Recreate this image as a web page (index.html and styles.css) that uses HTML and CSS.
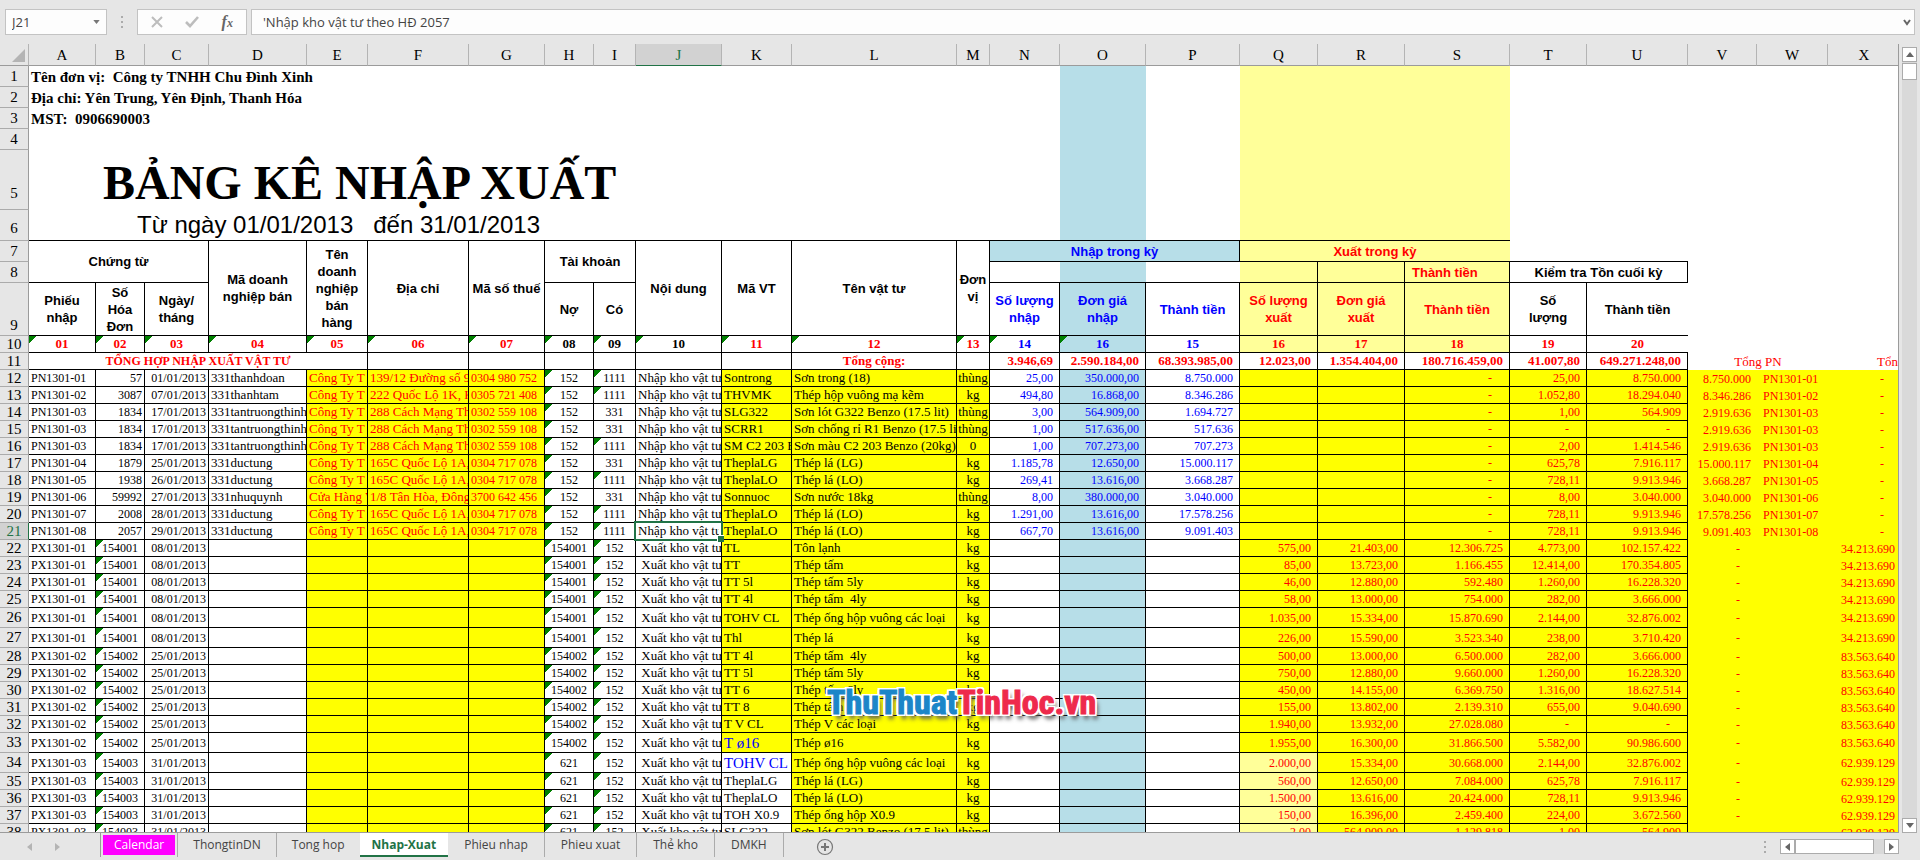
FILE: index.html
```html
<!DOCTYPE html>
<html lang="vi">
<head>
<meta charset="utf-8">
<title>Bảng kê nhập xuất</title>
<link rel="stylesheet" href="styles.css">
</head>
<body>
<div class="app">
  <header class="formula-bar">
    <label class="name-box">
      <input class="name-input" type="text" value="J21" aria-label="Name box">
      <svg class="caret" viewBox="0 0 8 5"><path d="M0 0h8L4 5z"/></svg>
    </label>
    <span class="grip"><i></i><i></i><i></i></span>
    <div class="fx-tools">
      <button type="button" aria-label="Cancel"><svg width="12" height="12" viewBox="0 0 12 12"><path d="M1 1l10 10M11 1L1 11" fill="none" stroke="#bdbdbd" stroke-width="2"/></svg></button>
      <button type="button" aria-label="Enter"><svg width="14" height="12" viewBox="0 0 14 12"><path d="M1 6l4 4 8-9" fill="none" stroke="#bdbdbd" stroke-width="2.6"/></svg></button>
      <button type="button" aria-label="Insert function" class="fx">f<small>x</small></button>
    </div>
    <label class="formula">
      <input class="formula-input" type="text" value="'Nhập kho vật tư theo HĐ 2057" aria-label="Formula bar">
      <svg class="chevron" width="8" height="7" viewBox="0 0 8 7"><path d="M1 1l3 4 3-4" fill="none" stroke="#666" stroke-width="2"/></svg>
    </label>
  </header>

  <main class="workspace">
    <div class="sheet">
      <table class="grid">
        <colgroup>
          <col class="c-head"><col class="c-a"><col class="c-b"><col class="c-c"><col class="c-d"><col class="c-e"><col class="c-f"><col class="c-g"><col class="c-h"><col class="c-i"><col class="c-j"><col class="c-k"><col class="c-l"><col class="c-m"><col class="c-n"><col class="c-o"><col class="c-p"><col class="c-q"><col class="c-r"><col class="c-s"><col class="c-t"><col class="c-u"><col class="c-v"><col class="c-w"><col class="c-x">
        </colgroup>
        <thead>
          <tr>
            <th class="corner"><svg width="13" height="13" viewBox="0 0 13 13"><path d="M13 0v13H0z" fill="#b4b4b4"/></svg></th>
            <th>A</th><th>B</th><th>C</th><th>D</th><th>E</th><th>F</th><th>G</th><th>H</th><th>I</th><th class="active">J</th><th>K</th><th>L</th><th>M</th><th>N</th><th>O</th><th>P</th><th>Q</th><th>R</th><th>S</th><th>T</th><th>U</th><th>V</th><th>W</th><th>X</th>
          </tr>
        </thead>
        <tbody>
          <tr class="r21"><th>1</th><td colspan="14" class="org">Tên đơn vị:  Công ty TNHH Chu Đình Xinh</td><td class="blue-bg"></td><td></td><td colspan="3" class="pale-bg"></td><td colspan="5"></td></tr>
          <tr class="r21"><th>2</th><td colspan="14" class="org">Địa chỉ: Yên Trung, Yên Định, Thanh Hóa</td><td class="blue-bg"></td><td></td><td colspan="3" class="pale-bg"></td><td colspan="5"></td></tr>
          <tr class="r21"><th>3</th><td colspan="14" class="org">MST:  0906690003</td><td class="blue-bg"></td><td></td><td colspan="3" class="pale-bg"></td><td colspan="5"></td></tr>
          <tr class="r21"><th>4</th><td colspan="14"></td><td class="blue-bg"></td><td></td><td colspan="3" class="pale-bg"></td><td colspan="5"></td></tr>
          <tr class="r60"><th>5</th><td colspan="14" class="title">BẢNG KÊ NHẬP XUẤT</td><td class="blue-bg"></td><td></td><td colspan="3" class="pale-bg"></td><td colspan="5"></td></tr>
          <tr class="r31"><th>6</th><td colspan="14" class="period bb">Từ ngày 01/01/2013   đến 31/01/2013</td><td class="blue-bg bb"></td><td class="bb"></td><td colspan="3" class="pale-bg bb"></td><td colspan="5"></td></tr>
          <tr class="r21 heads">
            <th>7</th>
            <td colspan="3" rowspan="2" class="box">Chứng từ</td>
            <td rowspan="3" class="box">Mã doanh nghiệp bán</td>
            <td rowspan="3" class="box">Tên doanh nghiệp bán hàng</td>
            <td rowspan="3" class="box">Địa chỉ</td>
            <td rowspan="3" class="box">Mã số thuế</td>
            <td colspan="2" rowspan="2" class="box">Tài khoản</td>
            <td rowspan="3" class="box">Nội dung</td>
            <td rowspan="3" class="box">Mã VT</td>
            <td rowspan="3" class="box">Tên vật tư</td>
            <td rowspan="3" class="box">Đơn vị</td>
            <td colspan="3" class="box blue-bg blue">Nhập trong kỳ</td>
            <td colspan="3" class="bb pale-bg red">Xuất trong kỳ</td>
            <td colspan="2" class="bb"></td>
            <td colspan="3"></td>
          </tr>
          <tr class="r21 heads">
            <th>8</th>
            <td class="bb"></td><td class="bb blue-bg"></td><td class="bb"></td>
            <td class="box pale-bg"></td><td class="box pale-bg"></td><td class="box pale-bg red start">Thành tiền</td>
            <td colspan="2" class="box">Kiểm tra Tồn cuối kỳ</td>
            <td colspan="3"></td>
          </tr>
          <tr class="r53 heads">
            <th>9</th>
            <td class="box">Phiếu nhập</td><td class="box">Số Hóa Đơn</td><td class="box">Ngày/<br>tháng</td>
            <td class="box">Nợ</td><td class="box">Có</td>
            <td class="box blue">Số lượng nhập</td><td class="box blue blue-bg">Đơn giá<br>nhập</td><td class="box blue">Thành tiền</td>
            <td class="box red pale-bg">Số lượng xuất</td><td class="box red pale-bg">Đơn giá<br>xuất</td><td class="box red pale-bg">Thành tiền</td>
            <td class="box">Số<br>lượng</td><td class="bb">Thành tiền</td>
            <td colspan="3"></td>
          </tr>
          <tr class="r17 codes">
            <th>10</th>
            <td class="box red flag">01</td><td class="box red flag">02</td><td class="box red flag">03</td><td class="box red flag">04</td><td class="box red flag">05</td><td class="box red flag">06</td><td class="box red flag">07</td>
            <td class="box flag">08</td><td class="box flag">09</td><td class="box flag">10</td>
            <td class="box red flag">11</td><td class="box red flag">12</td><td class="box red flag">13</td>
            <td class="box blue flag">14</td><td class="box blue blue-bg flag">16</td><td class="box blue">15</td>
            <td class="box red pale-bg">16</td><td class="box red pale-bg">17</td><td class="box red pale-bg">18</td>
            <td class="box red">19</td><td class="bb red">20</td>
            <td colspan="3"></td>
          </tr>
          <tr class="r17 totals">
            <th>11</th>
            <td colspan="5" class="box caption">TỔNG HỢP NHẬP XUẤT VẬT TƯ</td>
            <td class="box"></td><td class="box"></td><td class="box"></td><td class="box"></td><td class="box"></td><td class="box"></td>
            <td class="box label">Tổng cộng:</td><td class="box"></td>
            <td class="box">3.946,69</td><td class="box">2.590.184,00</td><td class="box">68.393.985,00</td>
            <td class="box">12.023,00</td><td class="box">1.354.404,00</td><td class="box">180.716.459,00</td>
            <td class="box">41.007,80</td><td class="box">649.271.248,00</td>
            <td colspan="2" class="side">Tổng PN</td><td class="side cut">Tổn</td>
          </tr>
        </tbody>
        <tbody id="records"></tbody>
      </table>
      <div class="watermark"><span>ThuThuat</span><em>TinHoc.vn</em></div>
    </div>
    <div class="vscroll">
      <button type="button" aria-label="Scroll up"><svg width="8" height="5" viewBox="0 0 8 5"><path d="M4 0l4 5H0z"/></svg></button>
      <div class="vtrack"><div class="vthumb"></div></div>
      <button type="button" aria-label="Scroll down"><svg width="8" height="5" viewBox="0 0 8 5"><path d="M0 0h8L4 5z"/></svg></button>
    </div>
  </main>

  <footer class="tab-bar">
    <div class="tab-nav">
      <button type="button" aria-label="Previous sheet"><svg width="5" height="8" viewBox="0 0 5 8"><path d="M5 0v8L0 4z"/></svg></button>
      <button type="button" aria-label="Next sheet"><svg width="5" height="8" viewBox="0 0 5 8"><path d="M0 0v8l5-4z"/></svg></button>
    </div>
    <nav class="tabs">
      <button type="button" class="tab calendar"><span>Calendar</span></button>
      <button type="button" class="tab">ThongtinDN</button>
      <button type="button" class="tab before-current">Tong hop</button>
      <button type="button" class="tab current">Nhap-Xuat</button>
      <button type="button" class="tab">Phieu nhap</button>
      <button type="button" class="tab">Phieu xuat</button>
      <button type="button" class="tab">Thẻ kho</button>
      <button type="button" class="tab">DMKH</button>
    </nav>
    <button type="button" class="add-tab" aria-label="New sheet"><svg width="18" height="18" viewBox="0 0 18 18"><circle cx="9" cy="9" r="7.5" fill="none" stroke="#777" stroke-width="1.2"/><path d="M9 5v8M5 9h8" stroke="#777" stroke-width="2"/></svg></button>
    <span class="grip bar-grip"><i></i><i></i><i></i></span>
    <div class="hscroll">
      <button type="button" aria-label="Scroll left"><svg width="5" height="8" viewBox="0 0 5 8"><path d="M5 0v8L0 4z"/></svg></button>
      <div class="htrack"><div class="hthumb"></div></div>
      <button type="button" aria-label="Scroll right"><svg width="5" height="8" viewBox="0 0 5 8"><path d="M0 0v8l5-4z"/></svg></button>
    </div>
  </footer>
</div>
<script src="app.js"></script>
</body>
</html>
```
FILE: styles.css
```css
* { box-sizing: border-box; }

body {
  margin: 0;
  background: #e6e6e6;
  color: #000;
  font-family: "Liberation Serif", "Times New Roman", serif;
}

button {
  margin: 0;
  padding: 0;
  border: 0;
  background: none;
  font: inherit;
  color: inherit;
}

.app {
  display: flex;
  flex-direction: column;
  height: 100vh;
  overflow: hidden;
}

/* Formula bar */
.formula-bar {
  display: flex;
  flex: none;
  height: 44px;
  padding: 9px 5px;
  font-family: "Open Sans", "Noto Sans", sans-serif;
  font-size: 13px;
  color: #444;
}

.name-box,
.fx-tools,
.formula {
  display: flex;
  align-items: center;
  background: #fdfdfd;
  border: 1px solid #c3c3c3;
}

.name-box { width: 102px; padding: 0 6px; }
.formula { flex: 1; margin-left: 4px; padding: 0 3px 0 11px; }

.name-input,
.formula-input {
  flex: 1;
  min-width: 0;
  padding: 0;
  border: 0;
  background: none;
  font: inherit;
  color: inherit;
}

.caret { width: 7px; height: 4px; fill: #777; }

.grip {
  display: flex;
  flex-direction: column;
  justify-content: center;
  align-items: center;
  gap: 3px;
  width: 30px;
}

.grip i { width: 2px; height: 2px; background: #ababab; }

.fx-tools { width: 110px; justify-content: space-around; padding: 0 2px; }
.fx-tools button { display: flex; align-items: center; }

.fx-tools .fx {
  align-items: baseline;
  font-family: "Liberation Serif", serif;
  font-style: italic;
  font-weight: bold;
  font-size: 16px;
  line-height: 16px;
  color: #666;
}

.fx small { font-size: 12px; }

/* Sheet */
.workspace {
  display: flex;
  flex: 1;
  min-height: 0;
  padding-right: 3px;
}

.sheet {
  position: relative;
  flex: 1;
  min-width: 0;
  overflow: hidden;
  background: #fff;
  border-right: 1px solid #9b9b9b;
  border-bottom: 1px solid #9b9b9b;
}

.grid {
  width: 1901px;
  table-layout: fixed;
  border-collapse: separate;
  border-spacing: 0;
}

.c-head { width: 29px; }
.c-a { width: 67px; }
.c-b { width: 49px; }
.c-c { width: 64px; }
.c-d { width: 98px; }
.c-e { width: 61px; }
.c-f { width: 101px; }
.c-g { width: 76px; }
.c-h { width: 49px; }
.c-i { width: 42px; }
.c-j { width: 86px; }
.c-k { width: 70px; }
.c-l { width: 165px; }
.c-m { width: 33px; }
.c-n { width: 70px; }
.c-o { width: 86px; }
.c-p { width: 94px; }
.c-q { width: 78px; }
.c-r { width: 87px; }
.c-s { width: 105px; }
.c-t { width: 77px; }
.c-u { width: 101px; }
.c-v { width: 69px; }
.c-w { width: 71px; }
.c-x { width: 73px; }

.grid th {
  padding: 0;
  background: #e6e6e6;
  border-right: 1px solid #9b9b9b;
  border-bottom: 1px solid #ababab;
  font-size: 15px;
  font-weight: normal;
  line-height: 16px;
  text-align: center;
  vertical-align: bottom;
}

.grid thead th {
  height: 22px;
  padding-bottom: 2px;
  border-right: 1px solid #b4b4b4;
  border-bottom: 1px solid #9b9b9b;
  background: #e6e6e6;
}

.grid thead .corner { padding: 0 3px 3px 0; text-align: right; line-height: 0; }

.grid thead .active,
.grid tbody .active {
  background: #d2d2d2;
  color: #217346;
}

.grid thead .active { border-bottom-color: #217346; }
.grid tbody .active { border-right-color: #217346; }

.grid td {
  padding: 0 2px;
  overflow: hidden;
  font-size: 13px;
  line-height: 16px;
  white-space: pre;
  vertical-align: middle;
}

.r17 > * { height: 17px; }
.r20 > * { height: 20px; }
.r21 > * { height: 21px; }
.r31 > * { height: 31px; }
.r53 > * { height: 53px; }
.r60 > * { height: 60px; }

.r20 th,
.r21 th { padding-bottom: 2px; }
.r31 th { padding-bottom: 4px; }
.r53 th { padding-bottom: 2px; }
.r60 th { padding-bottom: 8px; }

.grid .bb { border-bottom: 1px solid #000; }
.grid .box { border-right: 1px solid #000; border-bottom: 1px solid #000; }

.blue-bg { background: #b7dee8; }
.pale-bg { background: #ffff99; }
.yellow-bg { background: #ffff00; }
.blue { color: #0000ff; }
.red { color: #ff0000; }

.grid .org { font-size: 15px; font-weight: bold; line-height: 20px; }

.grid .title {
  padding-left: 74px;
  overflow: visible;
  font-size: 48px;
  font-weight: bold;
  line-height: 54px;
  vertical-align: bottom;
}

.grid .period {
  padding-left: 108px;
  font-family: "Liberation Sans", Arial, sans-serif;
  font-size: 24px;
  line-height: 30px;
}

.grid .heads td {
  padding: 0 2px;
  font-family: "Liberation Sans", Arial, sans-serif;
  font-weight: bold;
  line-height: 17px;
  text-align: center;
  white-space: normal;
}

.grid .heads .start { padding-left: 7px; text-align: left; }

.codes td { font-weight: bold; text-align: center; }

.grid .totals td {
  padding: 0 6px 0 0;
  color: #ff0000;
  font-weight: bold;
  text-align: right;
}

.grid .totals .caption { padding: 0; font-size: 12px; text-align: center; }
.grid .totals .label { padding: 0; text-align: center; }
.grid .totals .side { padding: 0; font-weight: normal; text-align: center; }
.grid .totals .cut { padding-left: 49px; text-align: left; }

/* Error marker in the top left corner of a cell */
.flag { background-image: linear-gradient(135deg, #008000 5px, transparent 5px); }

.grid .digits { font-size: 12px; }
.grid .right { text-align: right; }
.grid .center { padding: 0; text-align: center; }
.grid .amount { padding-right: 6px; font-size: 12px; text-align: right; }
.grid .dash { padding-right: 17px; }
.grid .ref { padding-left: 6px; }
.grid .large { font-size: 15px; color: #0000ff; }

.grid .selected { position: relative; overflow: visible; }
.selected span { display: block; overflow: hidden; }

.selected::before {
  content: "";
  position: absolute;
  inset: -2px -2px -2px -2px;
  border: 2px solid #217346;
}

.selected::after {
  content: "";
  position: absolute;
  right: -3px;
  bottom: -3px;
  width: 6px;
  height: 6px;
  background: #217346;
  border: solid #fff;
  border-width: 1px 0 0 1px;
}

.watermark {
  position: absolute;
  left: 827px;
  top: 638px;
  font-family: "Roboto Condensed", "Liberation Sans Narrow", "Liberation Sans", sans-serif;
  font-size: 34px;
  font-weight: bold;
  line-height: 40px;
  text-shadow: -2px 0 #fff, 2px 0 #fff, 0 -2px #fff, 0 2px #fff, -2px -2px #fff, 2px 2px #fff, 2px -2px #fff, -2px 2px #fff, 3px 5px 4px #555;
}

.watermark span { color: #1c86c8; -webkit-text-stroke: 1px #1c86c8; }
.watermark em { color: #ee2a4c; font-style: normal; -webkit-text-stroke: 1px #ee2a4c; }

/* Scroll bars */
.vscroll {
  display: flex;
  flex-direction: column;
  width: 15px;
  margin: 3px 0 0 3px;
}

.vscroll button,
.hscroll button {
  display: flex;
  flex: none;
  align-items: center;
  justify-content: center;
  width: 15px;
  height: 15px;
  background: #fff;
  border: 1px solid #ababab;
  fill: #666;
}

.vtrack { flex: 1; padding-top: 1px; background: #d9d9d9; }
.vthumb { height: 17px; background: #fff; border: 1px solid #ababab; }

.hscroll { display: flex; align-items: center; width: 119px; }
.htrack { flex: 1; height: 15px; background: #d9d9d9; }
.hthumb { width: 79px; height: 15px; background: #fff; border: 1px solid #ababab; }

/* Sheet tabs */
.tab-bar {
  display: flex;
  flex: none;
  height: 27px;
  padding-right: 21px;
  font-family: "Open Sans", "Noto Sans", sans-serif;
  font-size: 12px;
  color: #444;
}

.tab-nav {
  display: flex;
  align-items: center;
  gap: 23px;
  width: 100px;
  padding-left: 27px;
  fill: #b4b4b4;
}

.tab-nav button { display: flex; }

.tabs { display: flex; height: 24px; border-left: 1px solid #9b9b9b; }

.tab { padding: 0 15px 2px; border-right: 1px solid #ababab; }
.tab.calendar { padding: 2px; color: #fff; }
.calendar span { display: block; padding: 0 11px; background: #ff00ff; line-height: 20px; }
.tab.before-current { border-right: 0; }

.tab.current {
  padding: 0 12px;
  background: #fff;
  border-right: 0;
  border-bottom: 2px solid #217346;
  color: #217346;
  font-weight: bold;
}

.tab.current ~ .tab { padding: 0 16px 2px; }

.add-tab { display: flex; align-items: center; margin-left: 32px; }
.bar-grip { margin-left: auto; }
```
FILE: app.js
```js
// One line per record, columns A to X.
const records = `
PN1301-01|57|01/01/2013|331thanhdoan|Công Ty T|139/12 Đường số 9|0304 980 752|152|1111|Nhập kho vật tư|Sontrong|Sơn trong (18)|thùng|25,00|350.000,00|8.750.000|||-|25,00|8.750.000|8.750.000|PN1301-01|-
PN1301-02|3087|07/01/2013|331thanhtam|Công Ty T|222 Quốc Lộ 1K, K|0305 721 408|152|1111|Nhập kho vật tư|THVMK|Thép hộp vuông mạ kẽm|kg|494,80|16.868,00|8.346.286|||-|1.052,80|18.294.040|8.346.286|PN1301-02|-
PN1301-03|1834|17/01/2013|331tantruongthinh|Công Ty T|288 Cách Mạng Th|0302 559 108|152|331|Nhập kho vật tư|SLG322|Sơn lót G322 Benzo (17.5 lit)|thùng|3,00|564.909,00|1.694.727|||-|1,00|564.909|2.919.636|PN1301-03|-
PN1301-03|1834|17/01/2013|331tantruongthinh|Công Ty T|288 Cách Mạng Th|0302 559 108|152|331|Nhập kho vật tư|SCRR1|Sơn chống rỉ R1 Benzo (17.5 lit|thùng|1,00|517.636,00|517.636|||-|-|-|2.919.636|PN1301-03|-
PN1301-03|1834|17/01/2013|331tantruongthinh|Công Ty T|288 Cách Mạng Th|0302 559 108|152|1111|Nhập kho vật tư|SM C2 203 B|Sơn màu C2 203 Benzo (20kg)|0|1,00|707.273,00|707.273|||-|2,00|1.414.546|2.919.636|PN1301-03|-
PN1301-04|1879|25/01/2013|331ductung|Công Ty T|165C Quốc Lộ 1A,|0304 717 078|152|331|Nhập kho vật tư|TheplaLG|Thép lá (LG)|kg|1.185,78|12.650,00|15.000.117|||-|625,78|7.916.117|15.000.117|PN1301-04|-
PN1301-05|1938|26/01/2013|331ductung|Công Ty T|165C Quốc Lộ 1A,|0304 717 078|152|1111|Nhập kho vật tư|TheplaLO|Thép lá (LO)|kg|269,41|13.616,00|3.668.287|||-|728,11|9.913.946|3.668.287|PN1301-05|-
PN1301-06|59992|27/01/2013|331nhuquynh|Cửa Hàng V|1/8 Tân Hòa, Đông|3700 642 456|152|331|Nhập kho vật tư|Sonnuoc|Sơn nước 18kg|thùng|8,00|380.000,00|3.040.000|||-|8,00|3.040.000|3.040.000|PN1301-06|-
PN1301-07|2008|28/01/2013|331ductung|Công Ty T|165C Quốc Lộ 1A,|0304 717 078|152|1111|Nhập kho vật tư|TheplaLO|Thép lá (LO)|kg|1.291,00|13.616,00|17.578.256|||-|728,11|9.913.946|17.578.256|PN1301-07|-
PN1301-08|2057|29/01/2013|331ductung|Công Ty T|165C Quốc Lộ 1A,|0304 717 078|152|1111|Nhập kho vật tư|TheplaLO|Thép lá (LO)|kg|667,70|13.616,00|9.091.403|||-|728,11|9.913.946|9.091.403|PN1301-08|-
PX1301-01|154001|08/01/2013|||||154001|152| Xuất kho vật tư|TL|Tôn lạnh|kg||||575,00|21.403,00|12.306.725|4.773,00|102.157.422|-||34.213.690
PX1301-01|154001|08/01/2013|||||154001|152| Xuất kho vật tư|TT|Thép tấm|kg||||85,00|13.723,00|1.166.455|12.414,00|170.354.805|-||34.213.690
PX1301-01|154001|08/01/2013|||||154001|152| Xuất kho vật tư|TT 5l|Thép tấm 5ly|kg||||46,00|12.880,00|592.480|1.260,00|16.228.320|-||34.213.690
PX1301-01|154001|08/01/2013|||||154001|152| Xuất kho vật tư|TT 4l|Thép tấm  4ly|kg||||58,00|13.000,00|754.000|282,00|3.666.000|-||34.213.690
PX1301-01|154001|08/01/2013|||||154001|152| Xuất kho vật tư|TOHV CL|Thép ống hộp vuông các loại|kg||||1.035,00|15.334,00|15.870.690|2.144,00|32.876.002|-||34.213.690
PX1301-01|154001|08/01/2013|||||154001|152| Xuất kho vật tư|Thl|Thép lá|kg||||226,00|15.590,00|3.523.340|238,00|3.710.420|-||34.213.690
PX1301-02|154002|25/01/2013|||||154002|152| Xuất kho vật tư|TT 4l|Thép tấm  4ly|kg||||500,00|13.000,00|6.500.000|282,00|3.666.000|-||83.563.640
PX1301-02|154002|25/01/2013|||||154002|152| Xuất kho vật tư|TT 5l|Thép tấm 5ly|kg||||750,00|12.880,00|9.660.000|1.260,00|16.228.320|-||83.563.640
PX1301-02|154002|25/01/2013|||||154002|152| Xuất kho vật tư|TT 6|Thép tấm 6ly|kg||||450,00|14.155,00|6.369.750|1.316,00|18.627.514|-||83.563.640
PX1301-02|154002|25/01/2013|||||154002|152| Xuất kho vật tư|TT 8|Thép tấm 8ly|kg||||155,00|13.802,00|2.139.310|655,00|9.040.690|-||83.563.640
PX1301-02|154002|25/01/2013|||||154002|152| Xuất kho vật tư|T V CL|Thép V các loại|kg||||1.940,00|13.932,00|27.028.080|-|-|-||83.563.640
PX1301-02|154002|25/01/2013|||||154002|152| Xuất kho vật tư|T ø16|Thép ø16|kg||||1.955,00|16.300,00|31.866.500|5.582,00|90.986.600|-||83.563.640
PX1301-03|154003|31/01/2013|||||621|152| Xuất kho vật tư|TOHV CL|Thép ống hộp vuông các loại|kg||||2.000,00|15.334,00|30.668.000|2.144,00|32.876.002|-||62.939.129
PX1301-03|154003|31/01/2013|||||621|152| Xuất kho vật tư|TheplaLG|Thép lá (LG)|kg||||560,00|12.650,00|7.084.000|625,78|7.916.117|-||62.939.129
PX1301-03|154003|31/01/2013|||||621|152| Xuất kho vật tư|TheplaLO|Thép lá (LO)|kg||||1.500,00|13.616,00|20.424.000|728,11|9.913.946|-||62.939.129
PX1301-03|154003|31/01/2013|||||621|152| Xuất kho vật tư|TOH X0.9|Thép ống hộp X0.9|kg||||150,00|16.396,00|2.459.400|224,00|3.672.560|-||62.939.129
PX1301-03|154003|31/01/2013|||||621|152| Xuất kho vật tư|SLG322|Sơn lót G322 Benzo (17.5 lit)|thùng||||2,00|564.909,00|1.129.818|1,00|564.909|-||62.939.129
`.trim().split("\n").map(line => line.split("|"));

const FIRST_ROW = 12;
const SELECTED_ROW = 21;
const TALL_ROWS = [26, 27, 33, 34];

const columnClasses = {
  A: "box digits", B: "box digits", C: "box digits right", D: "box",
  E: "box yellow-bg red", F: "box yellow-bg red", G: "box yellow-bg red digits",
  H: "box digits center", I: "box digits center", J: "box", K: "box",
  L: "box yellow-bg", M: "box yellow-bg center",
  N: "box amount blue", O: "box amount blue blue-bg", P: "box amount blue",
  Q: "box amount red", R: "box amount red yellow-bg", S: "box amount red yellow-bg",
  T: "box amount red yellow-bg", U: "box amount red yellow-bg",
  V: "amount red yellow-bg", W: "digits ref red yellow-bg", X: "amount red yellow-bg"
};

function cellClasses(column, value, row, isIssue) {
  const classes = [columnClasses[column]];
  if (value === "-") classes.push("dash");
  if (column === "B") classes.push(isIssue ? "center" : "right");
  if (column === "K" && row < 34) classes.push("yellow-bg");
  if (column === "K" && (row === 33 || row === 34)) classes.push("large");
  if (column === "Q") classes.push(row < 34 ? "yellow-bg" : "pale-bg");
  if (column === "H" || (column === "I" && (isIssue || value === "1111")) || (column === "B" && isIssue)) classes.push("flag");
  if (column === "J" && row === SELECTED_ROW) classes.push("selected");
  return classes.join(" ");
}

const body = document.getElementById("records");
records.forEach((values, index) => {
  const row = FIRST_ROW + index;
  const tr = body.insertRow();
  tr.className = TALL_ROWS.includes(row) ? "r20" : "r17";

  const head = document.createElement("th");
  head.textContent = row;
  if (row === SELECTED_ROW) head.className = "active";
  tr.append(head);

  values.forEach((value, i) => {
    const column = String.fromCharCode(65 + i);
    const td = tr.insertCell();
    td.className = cellClasses(column, value, row, values[0].startsWith("PX"));
    const text = document.createElement("span");
    text.textContent = value;
    td.append(text);
  });
});
```
